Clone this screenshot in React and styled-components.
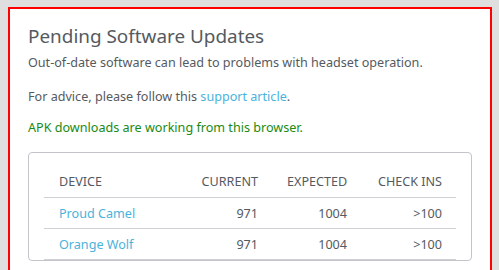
import React from "react";
import styled, { createGlobalStyle } from "styled-components";

const Global = createGlobalStyle`
  body {
    margin: 0;
    padding: 7px 7px 0 8px;
    background: #dfdfdf;
    font-family: "Noto Sans", "Open Sans", sans-serif;
    color: #555a61;
  }
`;

const Panel = styled.section`
  background: #fff;
  border: 2px solid #f00;
  border-bottom: none;
  padding: 13px 18px 20px;
  height: 300px;
`;

const Title = styled.h2`
  margin: 0;
  font-size: 18.9px;
  font-weight: 400;
  line-height: 28px;
  color: #555a61;
`;

const Text = styled.p`
  margin: ${(p) => p.$top || 0}px 0 0;
  font-size: 12.6px;
  line-height: 20px;
  color: ${(p) => (p.$ok ? "#1a8a12" : "#555a61")};
`;

const Link = styled.a`
  color: #4ab3dc;
  text-decoration: none;
`;

const Card = styled.div`
  margin-top: 14px;
  border: 1px solid #c4c4cc;
  border-radius: 4px;
  padding: 13px 15px 0;
`;

const Table = styled.table`
  width: 100%;
  border-collapse: collapse;
  table-layout: fixed;
  font-size: 12.6px;
`;

const Col = styled.col`
  width: ${(p) => p.$w}px;
`;

const Th = styled.th`
  font-weight: 400;
  text-align: ${(p) => (p.$right ? "right" : "left")};
  padding: 0 14px 0 15px;
  height: 31px;
  border-bottom: 1px solid #cfcfd4;
  color: #555a61;
`;

const Td = styled.td`
  text-align: ${(p) => (p.$right ? "right" : "left")};
  padding: 0 14px 0 15px;
  height: 30px;
  border-bottom: 1px solid #cfcfd4;
  color: #555a61;
`;

const rows = [
  { name: "Proud Camel", current: 971, expected: 1004, checkins: ">100" },
  { name: "Orange Wolf", current: 971, expected: 1004, checkins: ">100" },
];

export default function App() {
  return (
    <>
      <Global />
      <Panel>
        <Title>Pending Software Updates</Title>
        <Text $top={3}>Out-of-date software can lead to problems with headset operation.</Text>
        <Text $top={14}>
          For advice, please follow this <Link href="#">support article</Link>.
        </Text>
        <Text $top={11} $ok>APK downloads are working from this browser.</Text>
        <Card>
          <Table>
            <colgroup>
              <Col $w={139} />
              <Col $w={89} />
              <Col $w={89} />
              <Col />
            </colgroup>
            <thead>
              <tr>
                <Th>DEVICE</Th>
                <Th $right>CURRENT</Th>
                <Th $right>EXPECTED</Th>
                <Th $right>CHECK INS</Th>
              </tr>
            </thead>
            <tbody>
              {rows.map((r) => (
                <tr key={r.name}>
                  <Td>
                    <Link href="#">{r.name}</Link>
                  </Td>
                  <Td $right>{r.current}</Td>
                  <Td $right>{r.expected}</Td>
                  <Td $right>{r.checkins}</Td>
                </tr>
              ))}
            </tbody>
          </Table>
        </Card>
      </Panel>
    </>
  );
}
